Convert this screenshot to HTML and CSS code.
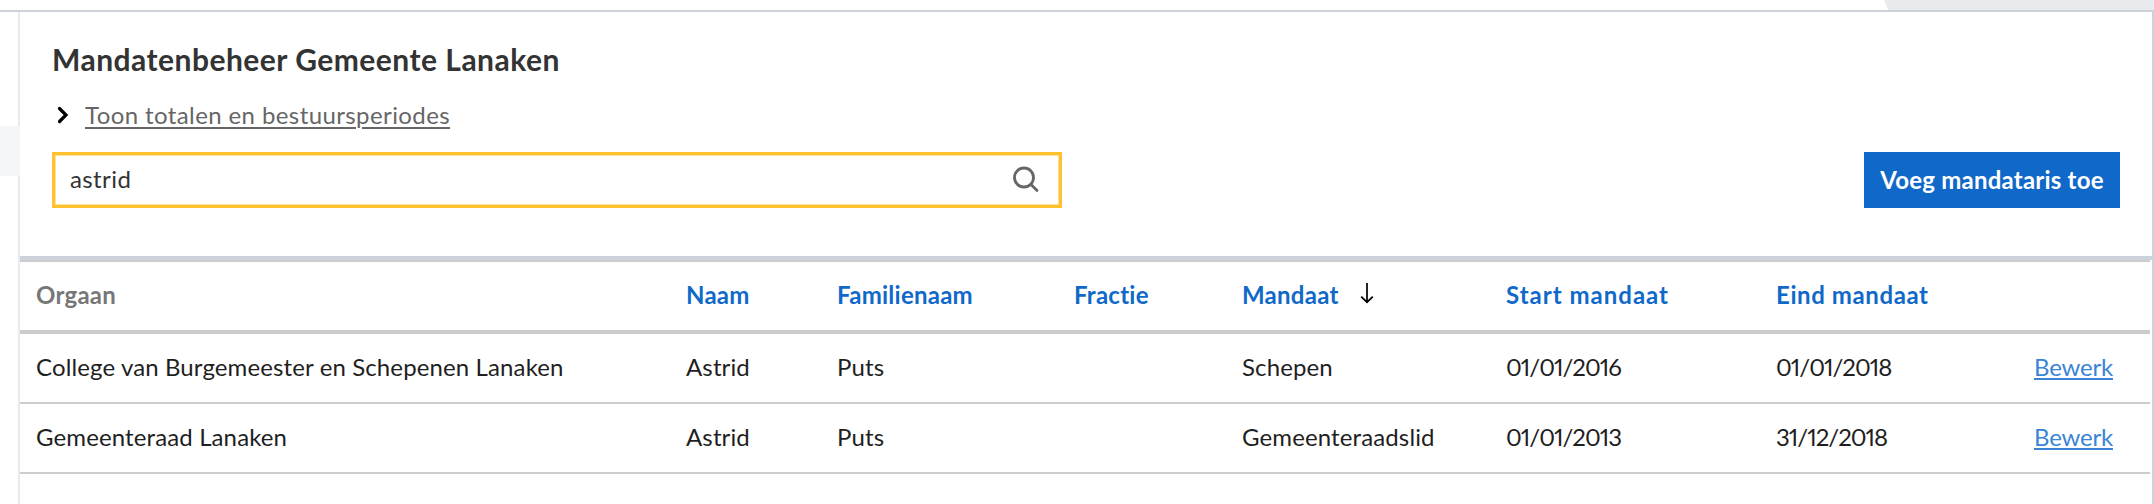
FILE: index.html
```html
<!DOCTYPE html>
<html lang="nl">
<head>
<meta charset="utf-8">
<title>Mandatenbeheer Gemeente Lanaken</title>
<link rel="stylesheet" href="styles.css">
</head>
<body>
<div class="topbar"><div class="topbar-tab"></div></div>
<div class="layout">
  <aside class="sidebar"><div class="sidebar-item"></div></aside>
  <main class="panel">
    <section class="intro">
      <h1 class="title">Mandatenbeheer Gemeente Lanaken</h1>
      <div class="toggle">
        <svg class="chevron" width="12" height="18" viewBox="0 0 12 18"><path d="M2.5 2.5 L9 9 L2.5 15.5" fill="none" stroke="#000" stroke-width="3.2" stroke-linecap="round"/></svg>
        <a class="toggle-link">Toon totalen en bestuursperiodes</a>
      </div>
      <div class="toolbar">
        <div class="search">
          <span class="search-value">astrid</span>
          <svg class="search-icon" width="28" height="28" viewBox="0 0 28 28"><g fill="none" stroke="#666" stroke-width="2.8" stroke-linecap="round"><circle cx="12" cy="11.5" r="9.5"/><path d="M19 18.5 L25 24.5"/></g></svg>
        </div>
        <button class="button">Voeg mandataris toe</button>
      </div>
    </section>
    <table class="table">
      <colgroup><col class="c-org"><col class="c-name"><col class="c-family"><col class="c-party"><col class="c-mandate"><col class="c-start"><col class="c-end"><col></colgroup>
      <thead>
        <tr>
          <th class="plain">Orgaan</th>
          <th>Naam</th>
          <th>Familienaam</th>
          <th>Fractie</th>
          <th>Mandaat<svg class="sort" width="14" height="22" viewBox="0 0 14 22"><path d="M7 1 V20 M1.2 14.6 L7 20.2 L12.8 14.6" fill="none" stroke="#000" stroke-width="1.7"/></svg></th>
          <th class="start">Start mandaat</th>
          <th class="end">Eind mandaat</th>
          <th></th>
        </tr>
      </thead>
      <tbody>
        <tr>
          <td>College van Burgemeester en Schepenen Lanaken</td>
          <td>Astrid</td>
          <td>Puts</td>
          <td></td>
          <td>Schepen</td>
          <td class="date">01/01/2016</td>
          <td class="date">01/01/2018</td>
          <td><a class="edit">Bewerk</a></td>
        </tr>
        <tr>
          <td>Gemeenteraad Lanaken</td>
          <td>Astrid</td>
          <td>Puts</td>
          <td></td>
          <td>Gemeenteraadslid</td>
          <td class="date">01/01/2013</td>
          <td class="date">31/12/2018</td>
          <td><a class="edit">Bewerk</a></td>
        </tr>
      </tbody>
    </table>
  </main>
</div>
</body>
</html>
```
FILE: styles.css
```css
* { box-sizing: border-box; }
body {
  margin: 0;
  height: 504px;
  overflow: hidden;
  background: #fff;
  color: #1f1f1f;
  font: 24px/28px Lato, "Noto Sans", sans-serif;
}
.topbar { height: 12px; border-bottom: 2px solid #cbd2da; }
.topbar-tab {
  height: 10px;
  margin-left: 1884px;
  background: #e8ebee;
  clip-path: polygon(0 0, 100% 0, 100% 100%, 4px 100%);
}
.layout { display: flex; height: 492px; }
.sidebar { width: 20px; padding-top: 114px; border-right: 2px solid #e8ebee; }
.sidebar-item { width: 20px; height: 50px; background: #f3f5f6; }
.panel { flex: 1; border-right: 2px solid #cbd2da; }
.intro { height: 248px; padding: 31px 32px 0; border-bottom: 4px solid #cbd2da; }
.title {
  margin: 0;
  color: #333;
  font-size: 30px;
  font-weight: 700;
  line-height: 32px;
  letter-spacing: .48px;
}
.toggle { display: flex; align-items: center; gap: 16px; height: 32px; margin: 24px 0 21px 5px; }
.toggle-link {
  color: #666;
  letter-spacing: .4px;
  text-decoration: underline;
  text-decoration-thickness: 2px;
  text-underline-offset: 3px;
}
.toolbar { display: flex; justify-content: space-between; }
.search {
  display: flex;
  align-items: center;
  justify-content: space-between;
  width: 1010px;
  height: 56px;
  padding: 0 19px 0 15px;
  border: 3px solid #ffc22e;
  box-shadow: inset 0 0 0 1px #ffe199;
}
.search-value { color: #333; letter-spacing: .4px; padding-bottom: 2px; }
.button {
  width: 256px;
  height: 56px;
  padding: 0 0 1px;
  border: 0;
  background: #1069c9;
  color: #fff;
  font: 700 24px/28px Lato, "Noto Sans", sans-serif;
  letter-spacing: .22px;
  white-space: nowrap;
}
.table {
  width: 2130px;
  border-collapse: separate;
  border-spacing: 0;
  table-layout: fixed;
  border-top: 2px solid #ccc;
}
.c-org { width: 666px; }
.c-name { width: 151px; }
.c-family { width: 237px; }
.c-party { width: 168px; }
.c-mandate { width: 264px; }
.c-start { width: 270px; }
.c-end { width: 258px; }
.table th, .table td { padding: 0; text-align: left; white-space: nowrap; vertical-align: middle; }
.table th:first-child, .table td:first-child { padding-left: 16px; }
.table th {
  height: 72px;
  padding-bottom: 2px;
  border-bottom: 4px solid #ccc;
  color: #1069c9;
  font-weight: 700;
  letter-spacing: .25px;
}
.table th.plain { color: #777; }
.table th.start { letter-spacing: 1px; }
.table th.end { letter-spacing: .6px; }
.table td { height: 70px; padding-bottom: 3px; border-bottom: 2px solid #ccc; letter-spacing: .12px; }
.table td.date { font-feature-settings: "pnum"; letter-spacing: -1px; }
.sort { margin-left: 21px; }
.edit {
  color: #3a84d6;
  letter-spacing: -.2px;
  text-decoration: underline;
  text-decoration-thickness: 2px;
  text-underline-offset: 2px;
}
```
